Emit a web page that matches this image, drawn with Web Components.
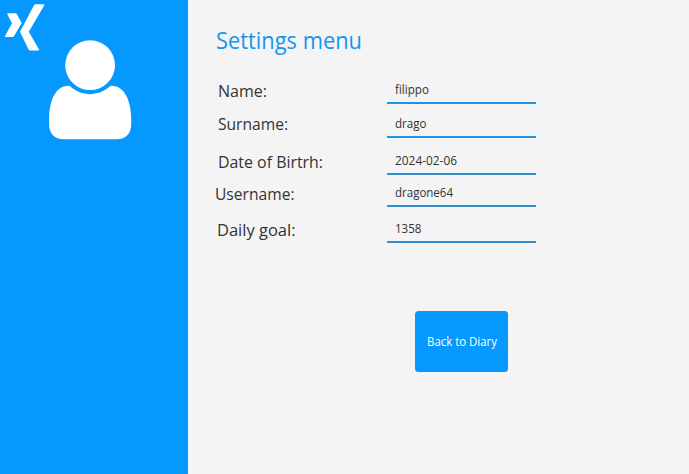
<!DOCTYPE html>
<html lang="en">
<head>
<meta charset="utf-8">
<title>Settings menu</title>
<style>
html, body { margin: 0; height: 100%; }
body { font-family: "Open Sans", "Noto Sans", sans-serif; background: #f4f4f4; color: #333; overflow: hidden; }
</style>
</head>
<body>
<settings-app></settings-app>
<script>
// Text condensed or widened to a given advance width.
class FitText extends HTMLElement {
  connectedCallback() {
    this.attachShadow({ mode: 'open' }).innerHTML = `
      <style>
        :host { display: block; white-space: nowrap; }
        span { display: inline-block; transform-origin: 0 50%; }
      </style><span><slot></slot></span>`;
    const span = this.shadowRoot.querySelector('span');
    const target = Number(this.getAttribute('width'));
    const natural = span.getBoundingClientRect().width;
    this.style.width = target + 'px';
    if (natural) span.style.transform = `scaleX(${target / natural})`;
  }
}

class BrandLogo extends HTMLElement {
  connectedCallback() {
    this.attachShadow({ mode: 'open' }).innerHTML = `
      <style>:host { display: block; width: 40px; height: 47px; } svg { display: block; }</style>
      <svg width="40" height="47" viewBox="5 4 40 47" fill="#fff">
        <path d="M8.4 13.3H15.4Q16.4 13.3 16.9 14.3L21.7 22.9L14.1 36Q13.6 36.9 12.6 36.9H5.7Q4.5 36.9 5.1 35.7L12 23.2L7.5 14.8Q6.9 13.3 8.4 13.3Z"/>
        <path d="M35.6 4.3H43.5Q44.9 4.3 44.2 5.6L28.8 31.8L38.9 49.2Q39.5 50.6 38.1 50.6H30.3Q29.1 50.6 28.5 49.5L20 31.8L34 5.3Q34.5 4.3 35.6 4.3Z"/>
      </svg>`;
  }
}

class UserAvatar extends HTMLElement {
  connectedCallback() {
    this.attachShadow({ mode: 'open' }).innerHTML = `
      <style>:host { display: block; width: 84px; height: 100px; } svg { display: block; }</style>
      <svg width="84" height="100" viewBox="48 40 84 100" fill="#fff">
        <circle cx="90.1" cy="65.2" r="24.9"/>
        <path d="M67 85.9C69.2 85.7 70.3 86.3 71.6 87.6C82 96.3 98 96.3 108.4 87.6C109.8 86.3 111 85.7 113.2 85.9C124.5 86.5 131.2 101 131.2 119V124.5C131.2 133.5 125.5 139.3 117 139.3H63.3C54.8 139.3 49.1 133.5 49.1 124.5V119C49.1 101 55.5 86.5 67 85.9Z"/>
      </svg>`;
  }
}

class SideBar extends HTMLElement {
  connectedCallback() {
    this.attachShadow({ mode: 'open' }).innerHTML = `
      <style>
        :host { display: block; box-sizing: border-box; background: #0598ff; padding: 4px 0 0 5px; }
        user-avatar { margin: -11px 0 0 43px; }
      </style>
      <brand-logo></brand-logo><user-avatar></user-avatar>`;
  }
}

class SettingsRow extends HTMLElement {
  connectedCallback() {
    const a = n => this.getAttribute(n);
    this.attachShadow({ mode: 'open' }).innerHTML = `
      <style>
        :host { display: grid; grid-template-columns: 171px 149px; height: 32px; align-items: end; }
        .label { font-size: 16.5px; line-height: 22px; margin-left: ${a('indent') || 2}px; padding-bottom: ${a('drop') || 2}px; }
        .field { height: 30px; box-sizing: border-box; padding: 7px 8px 0; border-bottom: 2px solid ${a('line') || '#1a95e8'}; font-size: 12px; line-height: 18px; }
      </style>
      <div class="label"><fit-text width="${a('label-width')}">${a('label')}</fit-text></div>
      <div class="field"><fit-text width="${a('value-width')}">${a('value')}</fit-text></div>`;
  }
}

class ActionButton extends HTMLElement {
  connectedCallback() {
    this.attachShadow({ mode: 'open' }).innerHTML = `
      <style>
        :host { display: block; }
        button { display: flex; align-items: center; justify-content: center; width: 93px; height: 61px; padding: 0; border: 0; border-radius: 3.5px; background: #0598ff; color: #fff; font: 12px/18px "Open Sans", "Noto Sans", sans-serif; }
      </style>
      <button><slot></slot></button>`;
  }
}

class SettingsApp extends HTMLElement {
  connectedCallback() {
    this.attachShadow({ mode: 'open' }).innerHTML = `
      <style>
        :host { display: grid; grid-template-columns: 188px 1fr; height: 474px; }
        main { padding: 24px 0 0 28px; }
        h1 { margin: 0; font-size: 23px; line-height: 32px; font-weight: 400; color: #1795ee; }
        .rows { display: flex; flex-direction: column; padding-top: 16px; }
        action-button { margin: 68px 0 0 199px; }
      </style>
      <side-bar></side-bar>
      <main>
        <h1><fit-text width="146">Settings menu</fit-text></h1>
        <div class="rows">
          <settings-row label="Name:" label-width="49" value="filippo" value-width="34"></settings-row>
          <settings-row style="margin-top:2px" label="Surname:" label-width="70" drop="3" value="drago" value-width="31.5"></settings-row>
          <settings-row style="margin-top:5px" label="Date of Birtrh:" label-width="105" value="2024-02-06" value-width="62" line="#308fcd"></settings-row>
          <settings-row label="Username:" label-width="79.5" indent="-1" value="dragone64" value-width="58" line="#308fcd"></settings-row>
          <settings-row style="margin-top:4px" label="Daily goal:" label-width="78.5" indent="0.5" value="1358" value-width="26.5" line="#308fcd"></settings-row>
        </div>
        <action-button><fit-text width="70">Back to Diary</fit-text></action-button>
      </main>`;
  }
}

customElements.define('fit-text', FitText);
customElements.define('brand-logo', BrandLogo);
customElements.define('user-avatar', UserAvatar);
customElements.define('side-bar', SideBar);
customElements.define('settings-row', SettingsRow);
customElements.define('action-button', ActionButton);
customElements.define('settings-app', SettingsApp);
</script>
</body>
</html>
